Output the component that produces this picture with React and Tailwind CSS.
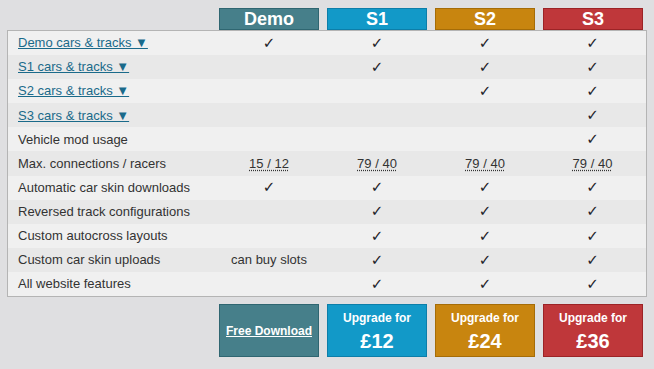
import React from 'react';

const tiers = [
  { name: 'Demo', bg: 'bg-[#467f8a]', border: 'border-[#2f6671]' },
  { name: 'S1', bg: 'bg-[#1299c8]', border: 'border-[#0c7ea9]' },
  { name: 'S2', bg: 'bg-[#c8850f]', border: 'border-[#a56c07]' },
  { name: 'S3', bg: 'bg-[#bf373a]', border: 'border-[#9c2326]' },
];

const Y = '✓';

const rows = [
  { label: 'Demo cars & tracks ▼', link: true, cells: [Y, Y, Y, Y] },
  { label: 'S1 cars & tracks ▼', link: true, cells: ['', Y, Y, Y] },
  { label: 'S2 cars & tracks ▼', link: true, cells: ['', '', Y, Y] },
  { label: 'S3 cars & tracks ▼', link: true, cells: ['', '', '', Y] },
  { label: 'Vehicle mod usage', cells: ['', '', '', Y] },
  { label: 'Max. connections / racers', dotted: true, cells: ['15 / 12', '79 / 40', '79 / 40', '79 / 40'] },
  { label: 'Automatic car skin downloads', cells: [Y, Y, Y, Y] },
  { label: 'Reversed track configurations', cells: ['', Y, Y, Y] },
  { label: 'Custom autocross layouts', cells: ['', Y, Y, Y] },
  { label: 'Custom car skin uploads', cells: ['can buy slots', Y, Y, Y] },
  { label: 'All website features', cells: ['', Y, Y, Y] },
];

const Cell = ({ value, dotted }) => {
  if (!value) return <div />;
  if (value === Y) {
    return (
      <div className="flex items-center justify-center text-[15px] text-[#1e2228] font-['DejaVu_Sans',sans-serif]">
        {Y}
      </div>
    );
  }
  return (
    <div className="flex items-center justify-center">
      <span className={dotted ? 'underline decoration-dotted decoration-[#333] underline-offset-2' : ''}>{value}</span>
    </div>
  );
};

const App = () => {
  return (
    <div className="w-[654px] h-[369px] bg-[#dfdfe1] pt-[8px] pl-[7px] font-['Liberation_Sans',Arial,sans-serif] text-[13px] text-[#333]">
      {/* Tier headers */}
      <div className="grid grid-cols-[208px_108px_108px_108px_108px] h-[22px]">
        <div />
        {tiers.map((t) => (
          <div key={t.name} className="flex justify-center">
            <div
              className={`w-[100px] h-[22px] border ${t.bg} ${t.border} flex items-center justify-center text-white text-[18px] font-bold leading-none`}
            >
              {t.name}
            </div>
          </div>
        ))}
      </div>

      {/* Feature table */}
      <div className="w-[640px] border border-[#b4b4b4]">
        {rows.map((r, i) => (
          <div
            key={r.label}
            className={`grid grid-cols-[207px_108px_108px_108px_107px] h-[24.1px] ${
              i % 2 === 0 ? 'bg-[#f0f0f0]' : 'bg-[#e8e8e8]'
            }`}
          >
            <div className="flex items-center pl-[10px]">
              {r.link ? (
                <a href="#" className="text-[#1a6a8a] underline">
                  {r.label}
                </a>
              ) : (
                <span>{r.label}</span>
              )}
            </div>
            {r.cells.map((c, j) => (
              <Cell key={j} value={c} dotted={r.dotted} />
            ))}
          </div>
        ))}
      </div>

      {/* Buy buttons */}
      <div className="grid grid-cols-[208px_108px_108px_108px_108px] mt-[7px]">
        <div />
        {tiers.map((t, i) => (
          <div key={t.name} className="flex justify-center">
            <div
              className={`w-[100px] h-[53px] border ${t.bg} ${t.border} flex flex-col items-center justify-center text-white font-bold`}
            >
              {i === 0 ? (
                <a href="#" className="underline text-[12px]">
                  Free Download
                </a>
              ) : (
                <>
                  <span className="text-[12px] leading-[16px]">Upgrade for</span>
                  <span className="text-[20px] leading-[20px] mt-[5px]">£{i * 12}</span>
                </>
              )}
            </div>
          </div>
        ))}
      </div>
    </div>
  );
};

export default App;
